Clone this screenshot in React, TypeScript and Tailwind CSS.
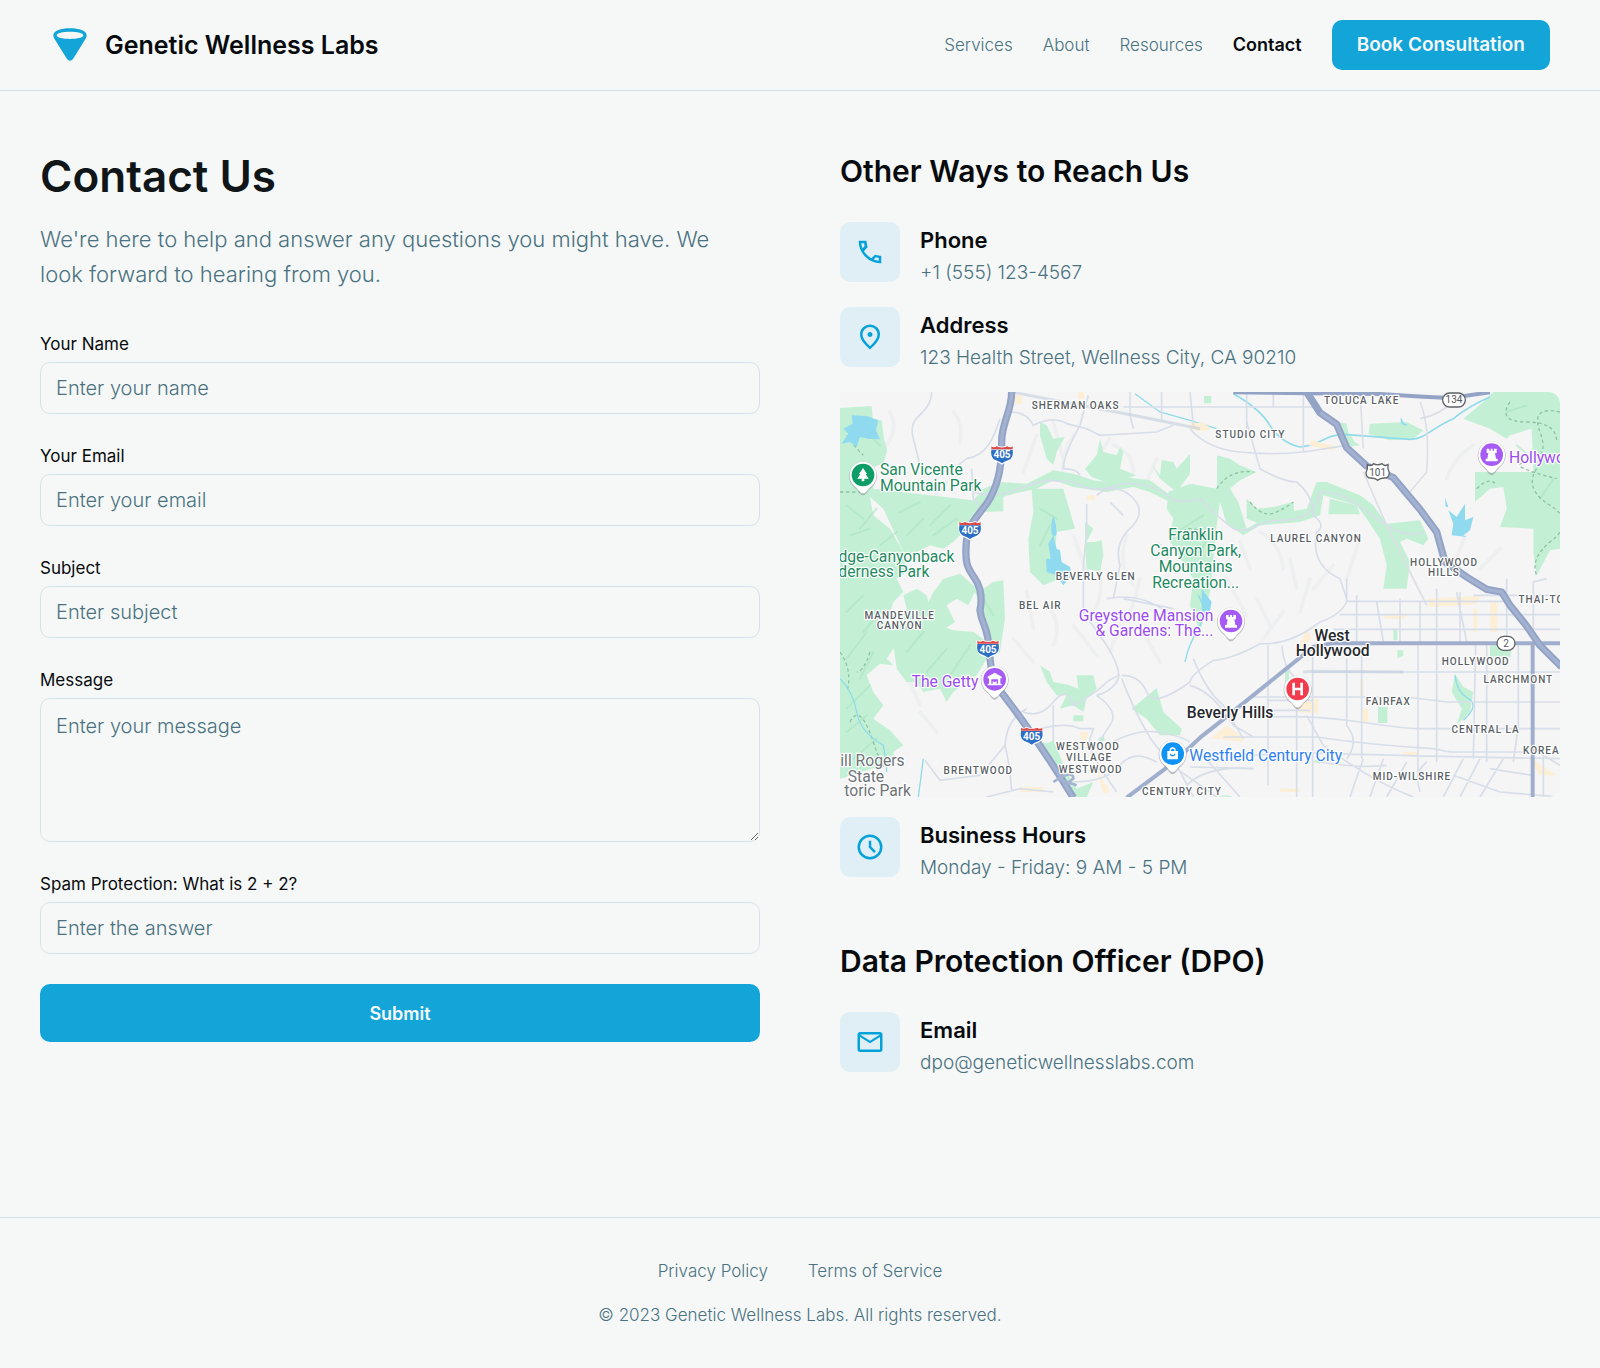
import React from "react";

type IconProps = { d: string };

function Symbol({ d }: IconProps) {
  return (
    <svg viewBox="0 -960 960 960" className="size-[30px]" fill="currentColor" aria-hidden="true">
      <path d={d} />
    </svg>
  );
}

const PHONE =
  "M798-120q-125 0-247-54.500T329-329Q229-429 174.500-551T120-798q0-18 0-42h242l41 208-117 117q20 37 47.500 71.500T387-386q31 31 65 57.500t72 48.500l114-116 202 41v235q-18 0-42 0ZM241-600l66-66-17-94h-89q5 41 14 81t26 79Zm358 358q39 17 79.500 27t81.500 13v-88l-94-19-67 67Z";
const PIN =
  "M480-480q33 0 56.500-23.500T560-560q0-33-23.500-56.500T480-640q-33 0-56.500 23.500T400-560q0 33 23.500 56.500T480-480Zm0 294q122-112 181-203.500T720-552q0-109-69.500-178.500T480-800q-101 0-170.500 69.500T240-552q0 71 59 162.500T480-186Zm0 106Q319-217 239.500-334.500T160-552q0-150 96.500-239T480-880q127 0 223.500 89T800-552q0 100-79.500 217.500T480-80Z";
const CLOCK =
  "m612-292 56-56-148-148v-184h-80v216l172 172Zm-132 212q-83 0-156-31.500T197-197q-54-54-85.500-127T80-480q0-83 31.500-156T197-763q54-54 127-85.500T480-880q83 0 156 31.500T763-763q54 54 85.500 127T880-480q0 83-31.500 156T763-197q-54 54-127 85.500T480-80Zm0-80q133 0 226.500-93.500T800-480q0-133-93.500-226.500T480-800q-133 0-226.500 93.500T160-480q0 133 93.500 226.500T480-160Z";
const MAIL =
  "M160-160q-33 0-56.500-23.500T80-240v-480q0-33 23.500-56.500T160-800h640q33 0 56.500 23.500T880-720v480q0 33-23.500 56.500T800-160H160Zm320-280L160-640v400h640v-400L480-440Zm0-80 320-200H160l320 200Z";

function Logo() {
  return (
    <svg viewBox="0 0 102 102" className="size-[34px]" aria-hidden="true">
      <path
        fill="#13a4d8"
        fillRule="evenodd"
        d="M51 1C78 1 101 8 101 22C101 27 99 31 96 35L60 93Q51 104 42 93L6 35C3 31 1 27 1 22C1 8 24 1 51 1ZM51 11C29 11 11 15 11 22C11 29 29 33 51 33C73 33 91 29 91 22C91 15 73 11 51 11Z"
      />
    </svg>
  );
}

function Row({ icon, title, children }: { icon: string; title: string; children: React.ReactNode }) {
  return (
    <div className="flex items-start gap-5">
      <div className="flex size-[60px] shrink-0 items-center justify-center rounded-[10px] bg-[#e0eff5] text-[#05a2d9]">
        <Symbol d={icon} />
      </div>
      <div>
        <h3 className="text-[22px] leading-9 font-semibold text-[#080b0d]">{title}</h3>
        <p className="text-[19px] leading-[29px] font-light text-[#4a7280]">{children}</p>
      </div>
    </div>
  );
}

function Field({ id, label, placeholder, type = "text" }: { id: string; label: string; placeholder: string; type?: string }) {
  return (
    <div className="flex flex-col gap-1.5">
      <label htmlFor={id} className="text-[17px] leading-6">{label}</label>
      <input
        id={id}
        type={type}
        placeholder={placeholder}
        className="h-[52px] w-full rounded-[10px] border border-[#d6e2e7] bg-transparent px-[15px] text-[20px] font-light placeholder:text-[#4a7280]"
      />
    </div>
  );
}

function MapLabel({ x, y, children, fill = "#5a5f66" }: { x: number; y: number; children: string; fill?: string }) {
  return (
    <text x={x} y={y} fill={fill} textAnchor="middle" className="text-[30px] font-medium tracking-widest">
      {children}
    </text>
  );
}

function Place({ x, y, fill, anchor = "start", children }: { x: number; y: number; fill: string; anchor?: "start" | "middle" | "end"; children: string }) {
  return (
    <text x={x} y={y} fill={fill} textAnchor={anchor} className="text-[47px]">
      {children}
    </text>
  );
}

function Pin({ x, y, fill, children }: { x: number; y: number; fill: string; children: React.ReactNode }) {
  return (
    <g transform={`translate(${x} ${y})`}>
      <path d="M0 61C-8 61-13 50-20 42C-34 32-42 17-42 2A42 42 0 0 1 42 2C42 17 34 32 20 42C13 50 8 61 0 61Z" fill="#8b8f96" opacity=".55" />
      <path d="M0 55C-8 55-13 46-20 38C-33 29-40 15-40 0A40 40 0 0 1 40 0C40 15 33 29 20 38C13 46 8 55 0 55Z" fill="#fff" />
      <circle r="34" fill={fill} />
      <g fill="#fff">{children}</g>
    </g>
  );
}

function Shield({ x, y }: { x: number; y: number }) {
  return (
    <g transform={`translate(${x} ${y})`}>
      <path d="M-35-25Q-24-21-16-27Q0-19 16-27Q24-21 35-25Q38 12 22 20Q8 25 0 31Q-8 25-22 20Q-38 12-35-25Z" fill="#fff" />
      <path d="M-32-14H32Q36 10 20 17Q8 21 0 27Q-8 21-20 17Q-36 10-32-14Z" fill="#2c6fc4" />
      <path d="M-32-24Q-24-18-16-24Q0-17 16-24Q24-18 32-24V-15H-32Z" fill="#dd4a45" />
      <text x="0" y="12" textAnchor="middle" fill="#fff" className="text-[30px] font-bold [stroke-width:0]">405</text>
    </g>
  );
}

function Rook() {
  return <path d="M-15-18h8v6h4v-6h6v6h4v-6h8v13h-5l3 17h5v8h-36v-8h5l3-17h-5Z" />;
}

function AreaMap() {
  return (
    <svg
      viewBox="0 0 2160 1215"
      role="img"
      aria-label="Map of Beverly Hills and West Hollywood"
      className="block w-full rounded-xl rounded-l-none bg-[#f5f5f5] font-['Roboto',sans-serif]"
    >
      <rect width="2160" height="1215" fill="#f5f5f5" />

      {/* Relief shading */}
      <g fill="none" stroke="#eeeff0" strokeWidth="11" strokeLinecap="round">
        <path d="M150 60q30 60-20 110M230 330q60-10 90-60M340 60q30 30 20 90M590 130l-40 110M640 90l30 110M700 130q-40 60-30 130M760 210l50-70M820 160q60 20 60 80M950 200l-30 70M700 430l40 110M780 560q10 80-40 120M860 430q-30 90 20 150M900 560l-30 110M960 460q50 60 10 120M560 600l20 110M620 640q50 50 20 120M700 700l70 90M840 700l-30 80M520 740l60 70M910 720l50 90M1200 450l30 80M1260 420q60 30 70 110M1350 500l20 90M1410 560l-30 100M1160 560l60 110M1250 620l40 80M1330 660l-60 80M1560 440l-40 120M1480 520l-60 70M1900 160q-60 40-80 100M1880 420l-40 100M1980 470l-60 60M200 850l40 90M330 800l-60 50M240 960l50 60" />
      </g>

      {/* Parkland */}
      <g fill="#c3f0d5">
        <path d="M0 48L95 42L98 80L125 85L132 140L142 175L130 215L100 225V290L400 325L430 290L480 270L560 275L640 235L700 245L760 265L800 270L850 255L930 265L985 305L1060 275L1080 295L1000 335L930 300L880 285L800 300L700 285L640 265L590 290L510 308L490 315V358L430 360L400 400L360 430L340 450L310 470L270 460L230 480L195 490L130 350L90 315L100 370L150 410L190 480L200 540L170 560L190 600L160 630L150 660L130 690L190 710L180 740L140 800L160 820L120 815L80 850L100 900L130 940L100 980L150 1015L190 1060L160 1080V1110L0 1160Z" />
        <path d="M310 560L360 545L400 580L430 590L460 570L490 565L495 680L480 780L430 790L440 700L420 640L405 600L385 640L350 620L320 640L345 690L300 720L290 690L260 640L280 600Z" />
        <path d="M230 590L260 610L270 650L300 700L340 715L400 720L430 740L440 800L410 850L340 900L320 930L300 890L250 900L230 870L200 870L170 830L160 760L180 690L200 650L190 610Z" />
        <path d="M600 90L620 100L640 140L675 135L650 180L640 220L620 200L600 130Z" />
        <path d="M735 230L770 190L780 140L790 180L830 190L840 165L850 180L840 230L890 250L810 275L755 255Z" />
        <path d="M935 215L960 250L965 205L1000 210L1010 230L1050 185L1050 245L1010 300L960 260Z" />
        <path d="M575 290H670L705 410L650 420L645 480L660 560L610 580L570 540L565 440L580 360Z" />
        <path d="M735 390L760 410L740 450L765 450L785 445L790 490L780 540L740 530L735 470Z" />
        <path d="M985 300L1050 275L1131 290V190L1170 200L1200 220L1250 240L1200 265L1170 290L1195 330L1220 410L1290 370L1400 350L1430 270L1460 270L1560 310L1600 340L1640 395L1740 385L1765 440L1750 460L1700 440L1680 450L1710 510L1700 590H1630L1640 520L1620 440L1580 380L1550 340L1450 310L1440 370L1380 390L1260 400L1210 430L1160 395L1140 330L1130 400L1110 600L1080 720L1050 640L1060 560L985 440L1000 380L980 350Z" />
        <path d="M1220 320L1250 350L1300 345L1360 330L1365 380L1260 395L1220 380Z" />
        <path d="M1470 320L1550 340L1560 367H1465Z" />
        <path d="M1590 95L1700 90L1750 115L1720 140L1650 145L1585 125Z" />
        <path d="M1495 90L1520 95L1525 120L1545 150L1560 160L1520 165Z" />
        <path d="M1092 12h22v22h-22Z" />
        <path d="M1870 80L1930 30L1960 0H2160V470L2130 475L2090 550L2080 480V410L1980 405L2000 350L1990 285L1950 290L1905 330V240H2080L2075 110L2010 130L2000 140L1950 110Z" />
        <path d="M600 820L630 840L640 870L690 880L715 890L710 850L760 850L770 890L740 920L730 960L700 940L660 950L680 910L650 910L620 870Z" />
        <path d="M875 950L950 888L970 960L1025 1010L1020 1030L960 1030L920 980ZM700 970h30v18h-30ZM610 1050L645 1065L630 1080L600 1075Z" />
        <path d="M610 1060L640 1045L680 1140L710 1190L760 1170L740 1215H700L650 1150ZM775 1040l15-10 5 15-20 12Z" />
        <path d="M1660 710h12v35h-12ZM1672 775h18v16l-18 8ZM1950 760h62v34h-62ZM1614 945h28v48h-28ZM1335 830h12v50h-12Z" />
        <path d="M1845 845L1870 885L1900 900L1890 960L1850 1000L1865 950L1835 900Z" />
        <path d="M1110 1213L1160 1210L1180 1215ZM1420 1110l20-15v20Z" />
      </g>
      <g fill="none" stroke="#a9e2bf" strokeWidth="6" strokeLinecap="round" opacity=".55">
        <path d="M20 340l50 40M110 350l-50 60M180 360l60-30M250 380l-50 50M330 340l-60 60M30 430l60-20M120 460l50-40M280 430l70-50M20 660l50-50M70 720l50-60M20 800l60-80M60 860l40-80M20 950l70-70M200 780l50-60M260 840l60-70M330 850l60-90M430 620l30 50M600 350l50 30M600 460l30-60M1010 420l80-50M1080 480l40-70M2030 160l60 50M2100 320l40-60M2000 60l60-20M80 120l40 40M40 1100l70-60M20 1020l60-50" />
      </g>
      <g fill="none" stroke="#8cc4a1" strokeWidth="4" strokeDasharray="10 8">
        <path d="M0 300H60M20 130q20 30 50 60M0 780q40 60 20 120M90 780q-20 60-40 60M30 990q30-60 70 60T140 1100M1130 290q40-60 110-50M1230 330q40 50 80 30t50-30M2010 30q-40 60 50 60t90 60M2160 60q-90-20-60 60t-40 90T2150 260M2090 230q-40 60 40 110t0 110q-60 50-40 100M1910 290q40-40 60-10M1090 420q-50-20-60 0" />
      </g>

      {/* Water */}
      <g fill="#90daef">
        <path d="M35 70L80 72L115 85L108 115L120 142L85 140L60 135L50 165L30 150L5 155L25 125L10 110L38 95Z" />
        <path d="M640 370q10 30 10 55q-8 15-15 0q-4-30 5-55ZM640 430L650 470L660 475L665 510L690 525L695 550L670 580L650 550L620 540L618 500L632 500L625 455Z" />
        <path d="M1815 315l10 30-8 0ZM1825 355L1850 375L1875 335L1875 385L1900 375L1890 415L1870 430L1880 435L1835 430L1840 395Z" />
        <path d="M1683 75q10 30 25 20l-10 6q-20 0-15-26ZM1085 590l30 40-12 60-18-30Z" />
      </g>
      <g fill="none" stroke="#8edbe9" strokeWidth="6">
        <path d="M885 5L960 60L1050 85L1130 110" strokeWidth="4" />
        <path d="M1180 5Q1260 50 1290 100T1380 165C1450 160 1450 125 1520 128L1710 142C1760 140 1770 110 1840 80Q1890 40 1950 15" strokeWidth="5" />
        <path d="M0 860Q40 900 50 960T130 1060Q140 1120 140 1140M250 1100L235 1215M1845 850Q1850 900 1885 920T1870 985M1075 610q30 50 0 100t-40 100" strokeWidth="4" />
      </g>

      {/* Business districts */}
      <g fill="#fdeed6">
        <path d="M525 10h22v25h-22ZM715 0h18v22h-18ZM1050 92h40l25 18-30 8-35-8ZM1415 145l80 20-20 10-70-15ZM1760 620l160-8-10 25-140 8ZM1640 665h60l-10 18-60-5ZM1950 630h22v90h-22ZM1900 650h12v70h-12ZM740 310h25v15h-25ZM1370 780l30-70 15 30ZM1395 925l40-5v45l-70-5ZM1560 860h10v50h-10ZM1565 950h20v40h-20ZM1110 1040l50-40 40 30 10 20-80-10ZM1690 1080h40v12h-40ZM2060 1090l90 60-50 0ZM540 1185h70v14h-70ZM720 1020h25l-10 45h-10ZM770 1130l40 70-20 5ZM1320 1190h60v10h-60Z" />
      </g>

      {/* Local streets */}
      <g fill="none" stroke="#d8dee9" strokeWidth="5">
        <path d="M275 0C270 80 200 60 220 140T240 220M480 80C460 140 440 190 380 200L340 230M515 60Q560 60 580 100Q640 70 680 95L740 110L780 130L950 120L1000 100M745 10L720 100Q670 190 670 230Q710 230 720 250M850 45H1050M965 0V85M1050 0L1060 100M870 0V70L880 110" />
        <path d="M395 230L400 320L420 340M400 300C480 330 560 275 620 265T700 270Q760 310 850 275Q940 270 1000 325Q1060 330 1080 320C1120 360 1150 390 1180 410C1240 430 1250 380 1330 385Q1430 380 1440 300Q1500 300 1540 330T1640 400Q1700 440 1750 420" />
        <path d="M740 335V420L730 520V660L800 760Q850 840 830 870T770 910M770 310Q820 270 870 310T880 400Q820 450 840 520L820 620M810 330L850 370M1050 45H1430M1220 0V140M1390 0V180M1050 110Q1100 170 1200 180T1390 180L1520 160M1300 0V45M1220 90L1260 230Q1330 270 1370 270Q1420 310 1420 370Q1460 400 1430 420Q1410 520 1500 560L1520 620" />
        <path d="M1560 0L1570 170M1740 30Q1770 100 1760 240L1710 300M1850 20Q1800 70 1740 80M1570 240L1640 400L1760 640" stroke="#dcdfe6" />
        <path d="M1520 628H2000M1520 560V630Q1500 670 1440 690Q1350 760 1260 755Q1180 800 1120 805Q1050 850 1050 870M1860 600V755M2120 560L2080 570V750M1900 610H2160M1500 668H2160M1480 712H2160M1550 610V750M1610 630L1630 750M1680 620V755M1740 630V755M1790 590V755M1850 600L1880 750M2000 560V755" />
        <path d="M1284 760V1180M1326 760Q1330 830 1370 860V1215M1418 770V1215M1565 760V1100M1520 800V1000Q1560 1050 1520 1100M1734 760V1150M1790 760V1110M1907 760L1900 1100M1940 760V1110M2035 760V1000L2020 1110M1420 840H2160M1240 915H1700L1820 930H2160M1290 975Q1420 970 1560 990T1730 1010H2160M1240 955H1410M1150 1035H1430Q1600 1060 1780 1070L1830 1080H2078M1230 1090Q1400 1080 1500 1085T2160 1100M1280 925H1420" />
        <path d="M1050 880Q1120 900 1180 1000L1240 1035M1060 800Q1100 900 1150 940L1210 1040M1400 970L1450 1060Q1600 1170 1720 1215M1240 1130L1050 1125M1570 1100L1530 1215M1630 1100L1590 1215M1700 1110L1640 1215M1760 1110Q1720 1140 1740 1200M1870 1100L1810 1215M1920 1100L1860 1215M1990 1100L1920 1215M1950 1130L2078 1150M1840 1150L1980 1200L2160 1215M1440 1110Q1560 1130 1640 1120M2078 1070L2160 1120M2110 1090V1215" />
        <path d="M550 960Q600 980 640 930T700 940Q770 900 790 880T840 850M845 850Q900 850 920 900T1050 870M560 950Q500 980 495 1060L420 1150L300 1165L255 1105M495 1060Q510 1120 515 1200M640 940V1050M600 1010Q680 990 720 1010H760L740 1070M770 910Q840 960 810 1000T780 1060M845 860Q880 950 920 1020T1000 1100M780 1070Q880 1010 950 1020T1050 1050M700 1170Q800 1170 840 1120T950 1110M440 1215L540 1190L640 1200M740 1050Q760 1100 830 1200M1000 1100L1060 1215M1010 1130L1130 1215M1080 1080L1200 1215M1040 1180Q1100 1120 1240 1130" />
        <path d="M800 620Q900 600 980 660T1060 730M850 620L1000 650" />
      </g>
      <g fill="none" stroke="#bcc7da" strokeWidth="9">
        <path d="M515 0L720 40L880 70L1080 110M1390 840L1420 838L1690 840" opacity=".5" />
      </g>

      {/* Highways */}
      <g fill="none" stroke="#93a3c6" strokeLinejoin="round">
        <path strokeWidth="12" stroke="#a0aecd" d="M860 1217L1000 1112L1080 1037L1150 982L1380 797L1420 764L1480 754H2160M2078 754V1217" />
        <path strokeWidth="12" d="M1180 1L1405 4L1620 6L1750 14L1830 18L1950 1" />
        <path strokeWidth="22" d="M515 0C515 60 485 90 485 150C487 230 470 290 440 335C410 375 385 400 380 440C372 520 385 530 405 560C425 590 427 620 420 655C425 700 445 700 448 780C455 850 460 870 485 902C530 960 610 1070 700 1217" />
        <path strokeWidth="22" d="M1400 0L1440 62L1490 97L1520 167L1580 222L1660 257L1740 352L1790 420L1815 510L1880 555L1940 592L1985 600L2010 640L2060 702L2100 760L2165 825" />
      </g>
      <g fill="none" stroke="#a4b2d1" strokeWidth="10">
        <path d="M515 0C515 60 485 90 485 150C487 230 470 290 440 335C410 375 385 400 380 440C372 520 385 530 405 560C425 590 427 620 420 655C425 700 445 700 448 780C455 850 460 870 485 902C530 960 610 1070 700 1217" />
        <path d="M1440 62L1490 97L1520 167L1580 222L1660 257L1740 352L1790 420L1815 510L1880 555L1940 592L1985 600L2010 640L2060 702L2100 760L2165 825" />
      </g>
      <path d="M640 1170q60-40 60-10l-20 15M530 960l18 18M650 1160l60 20" fill="none" stroke="#a4b2d1" strokeWidth="8" />

      <Shield x={486} y={187} />
      <Shield x={390} y={414} />
      <Shield x={444} y={770} />
      <Shield x={575} y={1031} />
      <g stroke="#5e6166" strokeWidth="4" fill="#fff">
        <rect x="1808" y="3" width="68" height="42" rx="21" />
        <rect x="1971" y="733" width="54" height="42" rx="21" />
        <path d="M1582 218Q1596 224 1600 215Q1613 222 1626 215Q1632 224 1644 218Q1642 232 1648 242Q1648 258 1632 258Q1620 258 1613 265Q1606 258 1594 258Q1578 258 1578 242Q1584 232 1582 218Z" />
      </g>
      <g fill="#55585e" textAnchor="middle" className="text-[30px]">
        <text x="1842" y="34">134</text>
        <text x="1998" y="764">2</text>
        <text x="1613" y="252">101</text>
      </g>

      <g stroke="#fff" strokeWidth="7" strokeLinejoin="round" style={{ paintOrder: "stroke" }}>
        <MapLabel x={707} y={50}>SHERMAN OAKS</MapLabel>
        <MapLabel x={1565} y={35}>TOLUCA LAKE</MapLabel>
        <MapLabel x={1231} y={137}>STUDIO CITY</MapLabel>
        <MapLabel x={1428} y={449}>LAUREL CANYON</MapLabel>
        <MapLabel x={1812} y={522}>HOLLYWOOD</MapLabel>
        <MapLabel x={1812} y={552}>HILLS</MapLabel>
        <MapLabel x={2131} y={632}>THAI-TOWN</MapLabel>
        <MapLabel x={767} y={564}>BEVERLY GLEN</MapLabel>
        <MapLabel x={601} y={651}>BEL AIR</MapLabel>
        <MapLabel x={179} y={682}>MANDEVILLE</MapLabel>
        <MapLabel x={179} y={712}>CANYON</MapLabel>
        <MapLabel x={415} y={1147}>BRENTWOOD</MapLabel>
        <MapLabel x={744} y={1075}>WESTWOOD</MapLabel>
        <MapLabel x={747} y={1106}>VILLAGE</MapLabel>
        <MapLabel x={752} y={1144}>WESTWOOD</MapLabel>
        <MapLabel x={1026} y={1210}>CENTURY CITY</MapLabel>
        <MapLabel x={1907} y={819}>HOLLYWOOD</MapLabel>
        <MapLabel x={2035} y={873}>LARCHMONT</MapLabel>
        <MapLabel x={1645} y={939}>FAIRFAX</MapLabel>
        <MapLabel x={1937} y={1024}>CENTRAL LA</MapLabel>
        <MapLabel x={2104} y={1087}>KOREA</MapLabel>
        <MapLabel x={1716} y={1163}>MID-WILSHIRE</MapLabel>

        <Place x={120} y={249} fill="#1f8a5f">San Vicente</Place>
        <Place x={120} y={297} fill="#1f8a5f">Mountain Park</Place>
        <Place x={343} y={509} fill="#1f8a5f" anchor="end">dge-Canyonback</Place>
        <Place x={268} y={556} fill="#1f8a5f" anchor="end">derness Park</Place>
        <Place x={1067} y={445} fill="#1f8a5f" anchor="middle">Franklin</Place>
        <Place x={1067} y={493} fill="#1f8a5f" anchor="middle">Canyon Park,</Place>
        <Place x={1067} y={540} fill="#1f8a5f" anchor="middle">Mountains</Place>
        <Place x={1067} y={588} fill="#1f8a5f" anchor="middle">Recreation...</Place>
        <Place x={1120} y={686} fill="#9a4bf0" anchor="end">Greystone Mansion</Place>
        <Place x={1120} y={733} fill="#9a4bf0" anchor="end">&amp; Gardens: The...</Place>
        <Place x={415} y={886} fill="#9a4bf0" anchor="end">The Getty</Place>
        <Place x={2007} y={213} fill="#9a4bf0">Hollywood</Place>
        <Place x={1048} y={1108} fill="#2e7ff0">Westfield Century City</Place>
        <Place x={194} y={1121} fill="#6d7377" anchor="end">ill Rogers</Place>
        <Place x={78} y={1169} fill="#6d7377" anchor="middle">State</Place>
        <Place x={213} y={1213} fill="#6d7377" anchor="end">toric Park</Place>
        <g className="font-medium">
          <Place x={1476} y={746} fill="#25282c" anchor="middle">West</Place>
          <Place x={1478} y={793} fill="#25282c" anchor="middle">Hollywood</Place>
          <Place x={1170} y={979} fill="#25282c" anchor="middle">Beverly Hills</Place>
        </g>
      </g>

      <Pin x={69} y={249} fill="#0f9d67">
        <path d="M0-21L12-3H8L17 11H4V19H-4V11H-17L-8-3H-12Z" />
      </Pin>
      <Pin x={1955} y={188} fill="#a75bf5"><Rook /></Pin>
      <Pin x={1173} y={687} fill="#a75bf5"><Rook /></Pin>
      <Pin x={464} y={862} fill="#a75bf5">
        <path d="M-21-8L0-20L21-8V-3H17V13H21V18H-21V13H-17V-3H-21ZM-10 0V13H-6V5L0 9L6 5V13H10V0Z" fillRule="evenodd" />
      </Pin>
      <Pin x={1373} y={891} fill="#f23c4e">
        <path d="M-16-19H-8V-4H8V-19H16V19H8V4H-8V19H-16Z" />
      </Pin>
      <Pin x={998} y={1085} fill="#1093f7">
        <path fillRule="evenodd" d="M-16-8H-9V-10A9 9 0 0 1 9-10V-8H16V17H-16ZM-5-8H5V-10A5 5 0 0 0-5-10ZM-8 0Q-8 8 0 8T8 0H5Q5 4 0 4T-5 0Z" />
      </Pin>
    </svg>
  );
}

const NAV = ["Services", "About", "Resources"];

export default function App() {
  return (
    <div className="min-h-screen bg-[#f6f8f8] font-['Inter',sans-serif] text-[#080b0d]">
      <header className="flex items-center justify-between border-b border-[#d6e2e7] px-[50px] py-5">
        <a href="#" className="flex items-center gap-[18px] pl-[3px]">
          <Logo />
          <span className="text-[25px] leading-8 font-semibold">Genetic Wellness Labs</span>
        </a>
        <div className="flex items-center gap-[30px]">
          <nav className="flex items-center gap-[30px] text-[17px] leading-6">
            {NAV.map((item) => (
              <a key={item} href="#" className="font-light text-[#4a7280]">{item}</a>
            ))}
            <a href="#" className="text-[18px] font-semibold">Contact</a>
          </nav>
          <button type="button" className="h-[50px] rounded-[10px] bg-[#13a4d8] px-[25px] text-[19px] font-semibold text-[#f6f8f8]">
            Book Consultation
          </button>
        </div>
      </header>

      <main className="grid grid-cols-2 items-start gap-20 px-10 pt-[60px] pb-[140px]">
        <section>
          <h1 className="text-[44px] leading-[51px] font-semibold text-[#101618]">Contact Us</h1>
          <p className="mt-5 max-w-[700px] text-[22px] leading-[35px] font-light text-[#4a7280]">
            We're here to help and answer any questions you might have. We look forward to hearing from you.
          </p>
          <form className="mt-10 flex flex-col gap-[30px]" onSubmit={(e) => e.preventDefault()}>
            <Field id="name" label="Your Name" placeholder="Enter your name" />
            <Field id="email" type="email" label="Your Email" placeholder="Enter your email" />
            <Field id="subject" label="Subject" placeholder="Enter subject" />
            <div className="flex flex-col gap-1.5">
              <label htmlFor="message" className="text-[17px] leading-6">Message</label>
              <textarea
                id="message"
                placeholder="Enter your message"
                className="block h-36 w-full resize-y rounded-[10px] border border-[#d6e2e7] bg-transparent px-[15px] py-3 text-[20px] leading-[30px] font-light placeholder:text-[#4a7280]"
              />
            </div>
            <Field id="spam" label="Spam Protection: What is 2 + 2?" placeholder="Enter the answer" />
            <button type="submit" className="h-[58px] w-full rounded-[10px] bg-[#13a4d8] text-[18px] font-semibold text-[#f6f8f8]">
              Submit
            </button>
          </form>
        </section>

        <section>
          <h2 className="text-[30px] leading-[41px] font-semibold">Other Ways to Reach Us</h2>
          <div className="mt-[30px] flex flex-col gap-5">
            <Row icon={PHONE} title="Phone">+1 (555) 123-4567</Row>
            <Row icon={PIN} title="Address">123 Health Street, Wellness City, CA 90210</Row>
            <AreaMap />
            <Row icon={CLOCK} title="Business Hours">Monday - Friday: 9 AM - 5 PM</Row>
          </div>
          <h2 className="mt-[59px] text-[30px] leading-[41px] font-semibold">Data Protection Officer (DPO)</h2>
          <div className="mt-[30px]">
            <Row icon={MAIL} title="Email">dpo@geneticwellnesslabs.com</Row>
          </div>
        </section>
      </main>

      <footer className="flex flex-col items-center border-t border-[#d6e2e7] px-10 pt-[39px] pb-[38px] text-[17px] leading-7 font-light text-[#4a7280]">
        <div className="flex gap-10">
          <a href="#">Privacy Policy</a>
          <a href="#">Terms of Service</a>
        </div>
        <p className="mt-4">© 2023 Genetic Wellness Labs. All rights reserved.</p>
      </footer>
    </div>
  );
}
